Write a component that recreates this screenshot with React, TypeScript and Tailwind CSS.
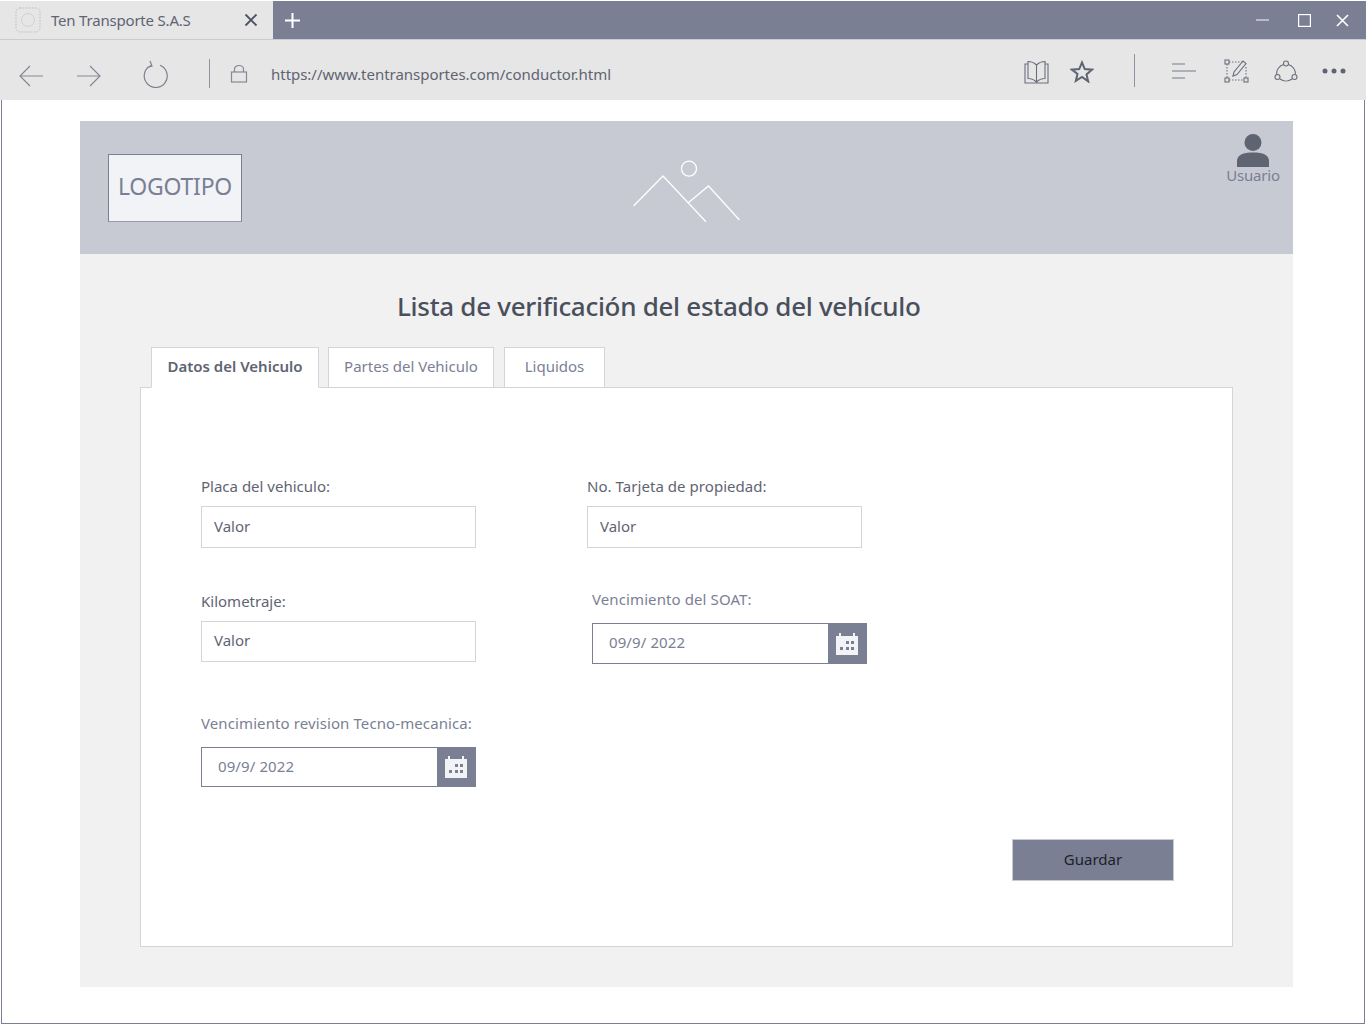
import React from "react";

const FONT = "[font-family:'Noto_Sans','Open_Sans',sans-serif]";

function TextField({ label, className, inputClass, track }: { label: string; className: string; inputClass: string; track: string }) {
  return (
    <div className={className}>
      <div className={`h-[20px] text-[15px] leading-[20px] text-[#5f6472] ${track}`}>{label}</div>
      <div className={`mt-[10px] flex w-[275px] items-center border border-[#d3d5de] bg-white pb-[2px] pl-[12px] text-[15px] text-[#5f6472] ${inputClass}`}>Valor</div>
    </div>
  );
}

function DateField({ label, className, boxClass }: { label: string; className: string; boxClass: string }) {
  return (
    <div className={className}>
      <div className="h-[20px] text-[15px] leading-[20px] tracking-[0.1px] text-[#7a7f94]">{label}</div>
      <div className={`mt-[14px] flex w-[275px] border border-[#7a7f94] bg-white ${boxClass}`}>
        <div className="flex flex-1 items-center pb-[2px] pl-[16px] text-[15px] tracking-[0.1px] text-[#7a7f94]">09/9/ 2022</div>
        <div className="flex w-[38px] items-center justify-center bg-[#7a7f94]">
          <svg width="22" height="22" viewBox="0 0 22 22">
            <path fill="#f2f3f6" d="M0 3h3V0h2v3h12V0h2v3h3v19H0z" />
            <g fill="#7a7f94">
              <rect x="10" y="8" width="3" height="3" />
              <rect x="15" y="8" width="3" height="3" />
              <rect x="4" y="14" width="3" height="3" />
              <rect x="10" y="14" width="3" height="3" />
              <rect x="15" y="14" width="3" height="3" />
            </g>
          </svg>
        </div>
      </div>
    </div>
  );
}

function Tab({ children, active, className }: { children: string; active?: boolean; className: string }) {
  return (
    <div
      className={`flex items-center justify-center border border-[#d3d5de] bg-white pb-[2px] text-[15px] ${active ? "z-10 -mb-px h-[41px] border-b-white font-semibold text-[#5f6472]" : "h-[40px] border-b-0 text-[#7a7f94]"} ${className}`}
    >
      {children}
    </div>
  );
}

export default function App() {
  return (
    <div className={`${FONT} h-[1025px] w-[1366px] overflow-hidden bg-white pt-[1px]`}>
      {/* title bar */}
      <div className="flex h-[38px] bg-[#7a7f94]">
        <div className="flex h-[38px] w-[273px] items-center bg-[#e6e6e6] text-[#5f6472]">
          <svg className="ml-[15px]" width="26" height="26" viewBox="0 0 26 26" fill="none">
            <rect x="1" y="1" width="24" height="24" rx="4" stroke="#b9bbc4" strokeDasharray="1.5 1.5" />
            <circle cx="13" cy="13" r="6.5" stroke="#cfd1d9" />
          </svg>
          <span className="ml-[10px] w-[193px] text-[15px] tracking-[-0.2px]">Ten Transporte S.A.S</span>
          <svg width="14" height="14" viewBox="0 0 14 14" stroke="#4e5360" strokeWidth="1.8">
            <path d="M1.5 1.5l11 11M12.5 1.5l-11 11" />
          </svg>
        </div>
        <div className="ml-[12px] flex items-center">
          <svg width="15" height="15" viewBox="0 0 15 15" stroke="#fff" strokeWidth="2">
            <path d="M7.5 0v15M0 7.5h15" />
          </svg>
        </div>
        <div className="ml-auto flex items-center pr-[17px]">
          <svg width="13" height="3" viewBox="0 0 13 3"><rect width="13" height="2" fill="#b9bcc8" /></svg>
          <svg className="ml-[29px]" width="13" height="13" viewBox="0 0 13 13" fill="none" stroke="#fff" strokeWidth="1.2">
            <rect x="0.6" y="0.6" width="11.8" height="11.8" />
          </svg>
          <svg className="ml-[25px]" width="13" height="13" viewBox="0 0 13 13" stroke="#fff" strokeWidth="1.6">
            <path d="M1 1l11 11M12 1L1 12" />
          </svg>
        </div>
      </div>
      {/* toolbar */}
      <div className="flex h-[61px] items-center border-t border-[#c9cbd4] bg-[#e6e6e6] text-[#6a6f7c]">
        <svg className="ml-[19px] mt-[12px]" width="24" height="22" viewBox="0 0 24 22" fill="none" stroke="#858995" strokeWidth="1.2">
          <path d="M24 11H1M11 1L1 11l10 10" />
        </svg>
        <svg className="ml-[34px] mt-[12px]" width="24" height="22" viewBox="0 0 24 22" fill="none" stroke="#858995" strokeWidth="1.2">
          <path d="M0 11h23M13 1l10 10-10 10" />
        </svg>
        <svg className="ml-[42px] mt-[8px]" width="26" height="28" viewBox="0 0 26 28" fill="none" stroke="#7d818d" strokeWidth="1.2">
          <path d="M8 5.500a11.500 11.500 0 1 0 9-.2M7 1l2 5-5 1.500" />
        </svg>
        <div className="ml-[40px] mt-[7px] h-[29px] w-px bg-[#8e929e]" />
        <svg className="ml-[20px] mt-[8px]" width="18" height="18" viewBox="0 0 18 18" fill="none" stroke="#858995" strokeWidth="1.2">
          <rect x="1.500" y="7" width="15" height="10" />
          <path d="M4.500 7V4a4.500 3.500 0 0 1 9 0v3" />
        </svg>
        <div className="ml-[23px] mt-[8px] w-[360px] text-[15px] tracking-[-0.03px] text-[#5f6472]">https://www.tentransportes.com/conductor.html</div>
        <svg className="ml-[393px] mt-[4px]" width="25" height="24" viewBox="0 0 25 24" fill="none" stroke="#6a6f7c" strokeWidth="1.1">
          <path d="M12.500 5C10 2.500 7 1.500 4 1.500v17c3 0 6 1 8.500 3.500 2.500-2.500 5.500-3.500 8.500-3.500v-17c-3 0-6 1-8.500 3.500zM12.500 5v17M4 4H1v19h23V4h-3" />
        </svg>
        <svg className="ml-[21px] mt-[2px]" width="24" height="23" viewBox="0 0 24 23" fill="none" stroke="#5f6472" strokeWidth="2">
          <path d="M12 2.500l2.800 6.600 7.200.6-5.500 4.700 1.700 7L12 17l-6.200 3.900 1.700-7L2 9.700l7.200-.6z" />
        </svg>
        <div className="ml-[40px] h-[33px] w-px bg-[#8e929e]" />
        <svg className="ml-[37px] mt-[2px]" width="24" height="16" viewBox="0 0 24 16" stroke="#9b9ea9" strokeWidth="1.6">
          <path d="M0 1h13M0 8h24M0 15h13" />
        </svg>
        <svg className="ml-[28px] mt-[2px]" width="25" height="24" viewBox="0 0 25 24" fill="none" stroke="#6a6f7c" strokeWidth="1.1">
          <rect x="1" y="1" width="4" height="4" />
          <rect x="1" y="19" width="4" height="4" />
          <rect x="20" y="19" width="4" height="4" />
          <path d="M5 3h14M3 5v14M5 21h15M22 8v11" strokeDasharray="1.5 1.5" />
          <path d="M9 17l1-4 9-11 3 2.500-9 11z" />
        </svg>
        <svg className="ml-[25px] mt-[3px]" width="24" height="24" viewBox="0 0 24 24" fill="none" stroke="#6a6f7c" strokeWidth="1.1">
          <circle cx="12" cy="3.500" r="2.500" />
          <circle cx="3.500" cy="17" r="2.500" />
          <circle cx="20.500" cy="17" r="2.500" />
          <path d="M9.500 4.500A10 10 0 0 0 2.500 14.500M14.500 4.500A10 10 0 0 1 21.500 14.500M6 19a10 10 0 0 0 12 0" />
        </svg>
        <svg className="ml-[24px] mt-[2px]" width="24" height="6" viewBox="0 0 24 6" fill="#5f6472">
          <circle cx="3" cy="3" r="2.500" />
          <circle cx="12" cy="3" r="2.500" />
          <circle cx="21" cy="3" r="2.500" />
        </svg>
      </div>

      {/* window body */}
      <div className="ml-[1px] h-[924px] w-[1364px] border-x border-b border-[#7a7f94] pt-[21px]">
        <div className="ml-[78px] h-[866px] w-[1213px] bg-[#f1f1f1]">
          <div className="flex h-[133px] bg-[#c7cad3]">
            <div className="ml-[28px] mt-[33px] flex h-[68px] w-[134px] items-center justify-center border border-[#7a7f94] border-b-[#989baa] bg-[#f2f3f7] pb-[3px] text-[23px] tracking-[-0.25px] text-[#7a7f94]">
              LOGOTIPO
            </div>
            <svg className="ml-[390px] mt-[38px]" width="110" height="64" viewBox="0 0 110 64" fill="none" stroke="#fff" strokeWidth="1.3">
              <circle cx="57" cy="9.700" r="7.500" />
              <path d="M1.500 47L31 17l43 45.700M56 44l20.500-17 31 34" />
            </svg>
            <div className="ml-auto mr-[12px] mt-[13px] flex w-[56px] flex-col items-center">
              <svg width="32" height="33" viewBox="0 0 32 33" fill="#5f6472">
                <circle cx="16" cy="8.500" r="8.500" />
                <path d="M0 33V27c0-6 6-8.500 16-8.500S32 21 32 27v6z" />
              </svg>
              <span className="-mt-[2px] text-[15px] leading-[20px] tracking-[-0.2px] text-[#7a7f94]">Usuario</span>
            </div>
          </div>

          <h1 className="ml-[317px] mt-[33px] text-[26px] font-medium leading-[38px] tracking-[-0.3px] text-[#4a4f5c]">
            Lista de verificación del estado del vehículo
          </h1>

          <div className="ml-[60px] mt-[22px] w-[1093px]">
            <div className="ml-[11px] flex items-end">
              <Tab active className="w-[168px]">Datos del Vehiculo</Tab>
              <Tab className="ml-[9px] w-[166px]">Partes del Vehiculo</Tab>
              <Tab className="ml-[10px] w-[101px]">Liquidos</Tab>
            </div>
            <div className="h-[560px] border border-[#d3d5de] bg-white">
              <div className="flex">
                <div className="ml-[60px]">
                  <TextField label="Placa del vehiculo:" className="mt-[88px]" inputClass="h-[42px]" track="tracking-[0px]" />
                  <TextField label="Kilometraje:" className="mt-[43px]" inputClass="h-[41px]" track="tracking-[0px]" />
                  <DateField label="Vencimiento revision Tecno-mecanica:" className="mt-[51px]" boxClass="h-[40px]" />
                </div>
                <div className="ml-[111px]">
                  <TextField label="No. Tarjeta de propiedad:" className="mt-[88px]" inputClass="h-[42px]" track="tracking-[0.05px]" />
                  <DateField label="Vencimiento del SOAT:" className="ml-[5px] mt-[41px]" boxClass="h-[41px]" />
                </div>
              </div>
              <div className="ml-[871px] mt-[52px] flex h-[42px] w-[162px] items-center justify-center border border-[#c7cad3] bg-[#7a7f94] pb-[2px] text-[15px] text-[#1c1f2a]">
                Guardar
              </div>
            </div>
          </div>
        </div>
      </div>
    </div>
  );
}
